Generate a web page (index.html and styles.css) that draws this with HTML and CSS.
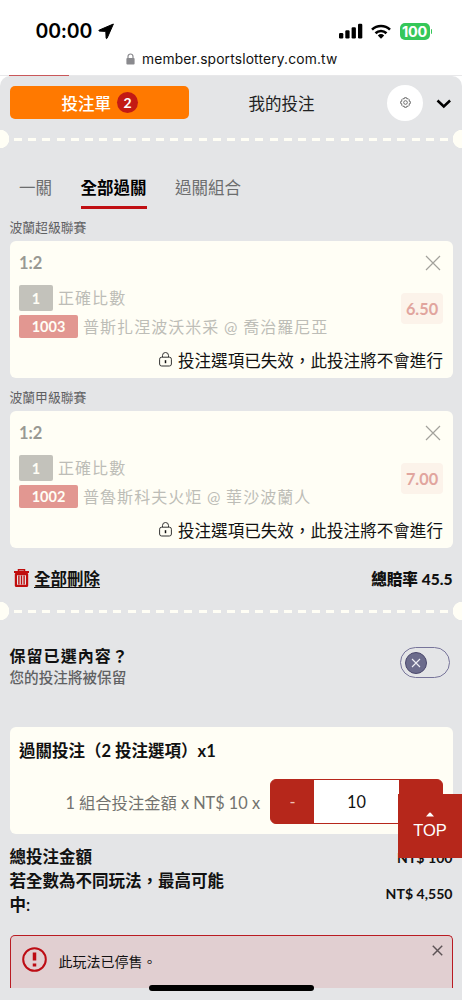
FILE: index.html
```html
<!DOCTYPE html>
<html lang="zh-Hant">
<head>
<meta charset="utf-8">
<meta name="viewport" content="width=device-width, initial-scale=1">
<title>投注單</title>
<link rel="stylesheet" href="styles.css">
</head>
<body>
<div class="screen">
  <header class="browser">
    <div class="status">
      <span class="clock">00:00</span>
      <svg class="arrow" width="17" height="17" viewBox="0 0 17 17"><path d="M15.4 1 1.2 7.1q-.9.6.1 1l6.5.3.3 6.7q.3 1 1 .1Z" fill="#000" stroke="#000" stroke-linejoin="round"/></svg>
      <svg class="signal" width="24" height="16" viewBox="0 0 24 16"><rect x="0" y="10" width="4.3" height="5.5" rx="1.2"/><rect x="6.3" y="7.3" width="4.3" height="8.2" rx="1.2"/><rect x="12.6" y="4.3" width="4.3" height="11.2" rx="1.2"/><rect x="19" y=".8" width="4.3" height="14.7" rx="1.2"/></svg>
      <svg class="wifi" width="20" height="15" viewBox="0 0 20 15"><g fill="none" stroke="#000" stroke-width="2.6"><path d="M1 5.6a13 13 0 0 1 18 0"/><path d="M4.5 9.2a8 8 0 0 1 11 0"/></g><path d="M10 14.8 6.8 11.6a4.7 4.7 0 0 1 6.4 0Z"/></svg>
      <span class="battery">100</span><i class="battery-tip"></i>
    </div>
    <div class="address">
      <svg width="9" height="12" viewBox="0 0 9 12"><path d="M2 6V3.5a2.5 2.5 0 0 1 5 0V6" fill="none" stroke="#8a8a8e" stroke-width="1.2"/><rect x=".4" y="5" width="8.2" height="6.5" rx="1" fill="#8a8a8e"/></svg>
      <span>member.sportslottery.com.tw</span>
    </div>
    <div class="page-edge"></div>
  </header>

  <main class="slip">
    <div class="tabs">
      <div class="tab-active">投注單<b>2</b></div>
      <div class="tab">我的投注</div>
      <div class="gear"><svg width="11" height="11" viewBox="0 0 24 24" fill="none" stroke="#555" stroke-width="1.8"><circle cx="12" cy="12" r="4"/><path stroke-linejoin="round" d="m9.8 1.500-.8 2.700-2.800-.6-2.600 2.600.6 2.800-2.700.8v4.400l2.700.8-.6 2.800 2.600 2.600 2.800-.6.8 2.700h4.400l.8-2.700 2.800.6 2.600-2.600-.6-2.800 2.700-.8V9.800L19.800 9l.6-2.800-2.600-2.600-2.800.6-.8-2.700Z"/></svg></div>
      <svg class="chevron" width="16" height="10" viewBox="0 0 16 10"><path d="m1.500 1.500 6.300 6 6.300-6" fill="none" stroke="#000" stroke-width="2.500"/></svg>
    </div>
    <div class="perforation"></div>
    <nav class="modes"><span>一關</span><span class="selected">全部過關</span><span>過關組合</span></nav>

    <h2 class="league">波蘭超級聯賽</h2>
    <article class="card pick">
      <div class="pick-head"><span>1:2</span><svg width="16" height="16" viewBox="0 0 16 16"><path d="m1 1 14 14M15 1 1 15" stroke="#a3a29c" stroke-width="1.2"/></svg></div>
      <div class="pick-body">
        <div>
          <div class="line"><span class="tag">1</span><span>正確比數</span></div>
          <div class="line"><span class="tag code">1003</span><span>普斯扎涅波沃米采 @ 喬治羅尼亞</span></div>
        </div>
        <span class="odds">6.50</span>
      </div>
      <div class="notice"><svg width="13" height="15" viewBox="0 0 13 15"><g fill="none" stroke="#333" stroke-width="1"><rect x=".6" y="5.200" width="11.800" height="8.800" rx="2"/><path d="M3.500 5V3.500a3 3 0 0 1 6 0V5"/></g><path d="M6.500 8.200v3" stroke="#111" stroke-width="1.500"/></svg><span>投注選項已失效，此投注將不會進行</span></div>
    </article>

    <h2 class="league second">波蘭甲級聯賽</h2>
    <article class="card pick">
      <div class="pick-head"><span>1:2</span><svg width="16" height="16" viewBox="0 0 16 16"><path d="m1 1 14 14M15 1 1 15" stroke="#a3a29c" stroke-width="1.2"/></svg></div>
      <div class="pick-body">
        <div>
          <div class="line"><span class="tag">1</span><span>正確比數</span></div>
          <div class="line"><span class="tag code">1002</span><span>普魯斯科夫火炬 @ 華沙波蘭人</span></div>
        </div>
        <span class="odds">7.00</span>
      </div>
      <div class="notice"><svg width="13" height="15" viewBox="0 0 13 15"><g fill="none" stroke="#333" stroke-width="1"><rect x=".6" y="5.200" width="11.800" height="8.800" rx="2"/><path d="M3.500 5V3.500a3 3 0 0 1 6 0V5"/></g><path d="M6.500 8.200v3" stroke="#111" stroke-width="1.500"/></svg><span>投注選項已失效，此投注將不會進行</span></div>
    </article>

    <div class="summary">
      <svg width="15" height="18" viewBox="0 0 15 18" fill="none" stroke="#c00d0d"><path d="M0 3h15" stroke-width="2"/><path d="M4.500 3V.8h6V3" stroke-width="1.500"/><path d="M1.900 5.200h11.200v11.600H1.900Z" stroke-width="2.200" stroke-linejoin="round"/><path d="M4.900 6.500v9M7.500 6.500v9M10.100 6.500v9" stroke-width="1.400"/></svg>
      <a>全部刪除</a>
      <strong>總賠率 45.5</strong>
    </div>
    <div class="perforation"></div>

    <section class="keep">
      <div><div class="keep-title">保留已選內容？</div><div class="keep-sub">您的投注將被保留</div></div>
      <div class="toggle"><i><svg width="10" height="10" viewBox="0 0 10 10"><path d="m1 1 8 8M9 1 1 9" stroke="#eeeef4" stroke-width="1.100"/></svg></i></div>
    </section>

    <section class="card stake">
      <div class="stake-title">過關投注（2 投注選項）x1</div>
      <div class="stake-row">
        <span>1 組合投注金額 x NT$ 10 x</span>
        <div class="stepper"><b>-</b><span>10</span><b>+</b></div>
      </div>
    </section>

    <section class="totals">
      <div class="total-labels"><div>總投注金額</div><div>若全數為不同玩法，最高可能中:</div></div>
      <div class="total-values"><div>NT$ 100</div><div>NT$ 4,550</div></div>
    </section>

    <section class="alert">
      <svg width="25" height="25" viewBox="0 0 25 25"><circle cx="12.500" cy="12.500" r="11.300" fill="none" stroke="#bd0c14" stroke-width="2"/><path d="M12.500 5.500v8M12.500 16.500v3" stroke="#bd0c14" stroke-width="3.500"/></svg>
      <span>此玩法已停售。</span>
      <svg class="dismiss" width="11" height="11" viewBox="0 0 10 10"><path d="m.7.7 8.600 8.600M9.300.7.7 9.300" stroke="#5d5356" stroke-width="1.300"/></svg>
    </section>
  </main>
  <div class="to-top"><svg width="8" height="5" viewBox="0 0 8 5"><path d="M0 4.500 3.300.8q.7-.6 1.400 0L8 4.500Z" fill="#fff"/></svg><span>TOP</span></div>
  <div class="home-bar"></div>
</div>
</body>
</html>
```
FILE: styles.css
```css
* { box-sizing: border-box; }
body { margin: 0; background: #fff; font-family: Lato, "Noto Sans CJK TC", sans-serif; font-size: 16.5px; color: #111; white-space: nowrap; }
.screen { position: relative; width: 462px; height: 1000px; overflow: hidden; }
.browser { height: 76px; padding-top: 19.500px; font-family: Inter, sans-serif; }
.status { display: flex; align-items: center; height: 23px; padding: 0 30px 0 35.500px; color: #000; }
.clock { width: 56.500px; font-size: 19.500px; font-weight: 600; letter-spacing: -.2px; }
.arrow { margin-left: 6px; }
.signal { margin-left: auto; }
.wifi { margin: 0 8.500px 0 8px; }
.battery { width: 30px; height: 17px; border-radius: 5px; background: #35c759; color: #fff; font-size: 14.500px; font-weight: 700; line-height: 17px; text-align: center; letter-spacing: -.3px; }
.battery-tip { width: 1.500px; height: 5px; margin-left: 1px; border-radius: 0 2px 2px 0; background: #35c759; }
.address { display: flex; align-items: center; gap: 7px; height: 32px; padding-left: 126px; font-size: 13.800px; letter-spacing: .16px; }
.page-edge { height: 1.500px; background: linear-gradient(90deg, transparent 9px, #c9575a 9px 69px, transparent 69px), #e8e8ea; }

.slip { height: 924px; border-radius: 10px 10px 0 0; background: #e4e5e7; overflow: hidden; }
.tabs { display: flex; align-items: center; height: 53px; padding: 0 10px 0 9.500px; }
.tab-active { display: flex; align-items: center; justify-content: center; gap: 6px; width: 179.500px; height: 33px; padding-left: 1px; border-radius: 5px; background: #ff7900; color: #fff; font-weight: 500; }
.tab-active b { width: 21px; height: 21px; border-radius: 50%; background: #c31a14; font-size: 14px; line-height: 21px; text-align: center; }
.tab { margin-left: 59.500px; color: #222; }
.gear { display: flex; align-items: center; justify-content: center; width: 36px; height: 36px; margin-left: auto; margin-right: 13px; border-radius: 50%; background: #fff; }
.chevron { margin-top: 2px; }
.perforation { height: 20px; background: radial-gradient(circle at 0 50%, #fffef5 9px, transparent 9.500px), radial-gradient(circle at 100% 50%, #fffef5 9px, transparent 9.500px), repeating-linear-gradient(90deg, #fffef5 0 8px, transparent 8px 14.200px) 14px 9px / 434.500px 3px no-repeat; }
.modes { display: flex; gap: 28.500px; height: 59px; margin-top: 19px; padding: 8px 0 0 19px; color: #6c6d6e; }
.modes span { height: 32.500px; line-height: 25px; }
.modes .selected { border-bottom: 3.500px solid #c00f13; color: #000; font-weight: 700; }
.league { height: 14px; margin: -7px 0 7px; padding-left: 9.500px; color: #5f6062; font-size: 12.800px; line-height: 14px; font-weight: 400; }
.league.second { margin: 12px 0 7px; }
.card { margin: 0 9.500px; border-radius: 6px; background: #fffef5; }
.pick { height: 137px; padding: 12px 9.500px 0; }
.pick-head { display: flex; align-items: center; justify-content: space-between; height: 20px; padding-right: 2px; color: #999993; font-size: 16.500px; font-weight: 700; }
.pick-body { display: flex; justify-content: space-between; padding-top: 10px; }
.line { display: flex; align-items: center; height: 29px; gap: 5px; color: #bdbdb7; font-size: 16px; letter-spacing: 1.050px; word-spacing: -.5px; line-height: 26px; }
.tag { width: 34px; height: 26px; border-radius: 2px; background: #c3c2bb; color: #fffef5; font-size: 14.500px; font-weight: 700; letter-spacing: 0; line-height: 27px; text-align: center; }
.code { width: 59px; height: 23.500px; background: #e29791; line-height: 24px; }
.odds { width: 42px; height: 30.500px; margin-top: 10px; border-radius: 4px; background: #fcf3ea; color: #e1a59e; font-size: 16.300px; font-weight: 700; line-height: 31px; text-align: center; }
.notice { display: flex; align-items: center; justify-content: flex-end; gap: 6.500px; height: 24px; margin-top: 6.500px; color: #111; font-size: 16.570px; }

.summary { display: flex; align-items: center; height: 52.500px; padding: 8px 9.500px 0 14px; gap: 5px; color: #111; font-weight: 700; }
.summary a { position: relative; top: -.5px; text-decoration: underline; text-underline-offset: 2px; text-decoration-thickness: 1.300px; }
.summary strong { margin-left: auto; font-size: 15.600px; }
.keep { display: flex; justify-content: space-between; height: 106px; padding: 23px 12px 0 9.500px; }
.keep-title { height: 24px; line-height: 24px; font-size: 16px; letter-spacing: 1.050px; font-weight: 700; }
.keep-sub { height: 20px; color: #606163; font-size: 14.600px; line-height: 20px; font-weight: 500; }
.toggle { width: 50px; height: 31px; margin-top: 3.500px; padding: 3.500px 4px; border: 1.500px solid #77749a; border-radius: 16px; }
.toggle i { display: flex; align-items: center; justify-content: center; width: 22px; height: 22px; border: 1px solid #4b486d; border-radius: 50%; background: #6c6c8c; }
.stake { height: 107px; padding: 12.500px 9.500px 0; }
.stake-title { height: 25px; line-height: 25px; font-weight: 700; }
.stake-row { display: flex; align-items: center; justify-content: flex-end; gap: 10px; height: 45px; margin-top: 15px; color: #73736f; font-size: 16.300px; }
.stepper { display: flex; width: 173px; height: 45px; border: 1px solid #b6271b; border-radius: 6px; background: #b6271b; overflow: hidden; }
.stepper b { width: 43px; color: #efc0b5; font-weight: 400; line-height: 43px; text-align: center; }
.stepper span { width: 85px; background: #fff; color: #111; line-height: 44px; text-align: center; }
.totals { display: flex; justify-content: space-between; height: 101.500px; padding: 11px 9.500px 0; font-weight: 700; line-height: 24px; }
.total-labels { width: 223px; white-space: normal; font-weight: 600; }
.total-values { font-size: 14.100px; text-align: right; padding-top: 1px; }
.total-values div + div { margin-top: 12px; }
.alert { display: flex; height: 53px; margin: 0 9.500px; padding: 10.500px 9px 0 11.500px; gap: 11.500px; border: 1.500px solid #b91b23; border-bottom: 0; border-radius: 5px 5px 0 0; background: #e1cfd1; font-size: 14px; }
.alert span { padding-top: 3px; line-height: 24px; }
.dismiss { margin-left: auto; margin-top: -2px; }
.to-top { position: absolute; left: 398px; top: 794px; width: 64px; height: 63.500px; background: #b6271b; color: #fff; display: flex; flex-direction: column; align-items: center; padding-top: 17.500px; gap: 3px; font-family: "Liberation Sans", sans-serif; font-size: 16.500px; line-height: 20px; }
.home-bar { position: absolute; left: 149px; top: 984.500px; width: 164.500px; height: 6px; border-radius: 3px; background: #000; }
```
